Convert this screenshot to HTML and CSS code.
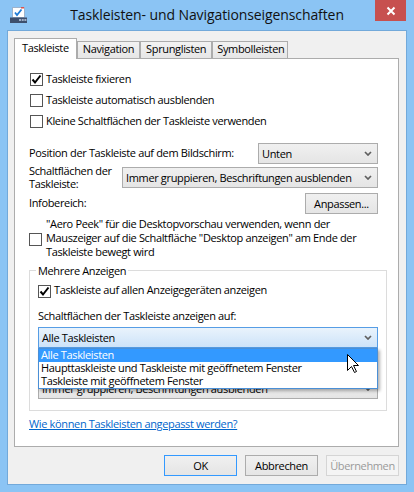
FILE: index.html
```html
<!DOCTYPE html>
<html lang="de">
  <head>
    <meta charset="UTF-8" />
    <meta name="viewport" content="width=device-width, initial-scale=1.0" />
    <title>Taskleisten- und Navigationseigenschaften</title>
    <link rel="stylesheet" href="styles.css">
  </head>
  <body>
    <div class="window">
      <header class="titlebar">
        <svg class="app-icon" width="17" height="16" viewBox="0 0 17 16">
          <rect x="2.5" y="0.5" width="12" height="10" fill="#fff" stroke="#9db3cc" />
          <rect x="11" y="0" width="3" height="1.5" fill="#d9534f" />
          <path d="M5 5.5 L7 8 L11.5 2.5" fill="none" stroke="#1f7bd6" stroke-width="1.8" />
          <rect x="0" y="10.5" width="17" height="5.5" fill="#3d4f6d" />
          <rect x="9" y="12" width="2" height="2" fill="#9fb0c8" />
          <rect x="11.7" y="12" width="2" height="2" fill="#9fb0c8" />
          <rect x="14.4" y="12" width="2" height="2" fill="#9fb0c8" />
        </svg>
        <div class="title">Taskleisten- und Navigationseigenschaften</div>
        <div class="close-btn">
          <svg width="10" height="10" viewBox="0 0 10 10">
            <path d="M1.5 1.5 L8.5 8.5 M8.5 1.5 L1.5 8.5" stroke="#fff" stroke-width="2" />
          </svg>
        </div>
      </header>

      <main class="client">
        <ul class="tabs">
          <li class="tab active">Taskleiste</li>
          <li class="tab">Navigation</li>
          <li class="tab">Sprunglisten</li>
          <li class="tab">Symbolleisten</li>
        </ul>

        <div class="panel">
          <div class="check">
            <span class="box"><svg width="11" height="11" viewBox="0 0 11 11"><path d="M1.5 5.5 L4 8.5 L9.5 1.5" fill="none" stroke="#000" stroke-width="2" /></svg></span>
            <span class="text">Taskleiste fixieren</span>
          </div>
          <div class="check">
            <span class="box"></span>
            <span class="text">Taskleiste automatisch ausblenden</span>
          </div>
          <div class="check">
            <span class="box"></span>
            <span class="text">Kleine Schaltflächen der Taskleiste verwenden</span>
          </div>

          <div class="field pos-row">
            <span class="text">Position der Taskleiste auf dem Bildschirm:</span>
            <div class="combo combo-small">
              <span>Unten</span>
              <svg class="chevron" width="8" height="5" viewBox="0 0 8 5"><path d="M1 1 L4 4 L7 1" fill="none" stroke="#5f5f5f" stroke-width="1.7" /></svg>
            </div>
          </div>

          <div class="field group-row">
            <span class="field-label">Schaltflächen der<br />Taskleiste:</span>
            <div class="combo grow">
              <span>Immer gruppieren, Beschriftungen ausblenden</span>
              <svg class="chevron" width="8" height="5" viewBox="0 0 8 5"><path d="M1 1 L4 4 L7 1" fill="none" stroke="#5f5f5f" stroke-width="1.7" /></svg>
            </div>
          </div>

          <div class="field info-row">
            <span class="text">Infobereich:</span>
            <button class="btn" type="button">Anpassen...</button>
          </div>

          <div class="check multi">
            <span class="box"></span>
            <span>"Aero Peek" für die Desktopvorschau verwenden, wenn der<br />Mauszeiger auf die Schaltfläche "Desktop anzeigen" am Ende der<br />Taskleiste bewegt wird</span>
          </div>

          <fieldset class="group">
            <legend>Mehrere Anzeigen</legend>
            <div class="check in-group">
              <span class="box"><svg width="11" height="11" viewBox="0 0 11 11"><path d="M1.5 5.5 L4 8.5 L9.5 1.5" fill="none" stroke="#000" stroke-width="2" /></svg></span>
              <span class="text">Taskleiste auf allen Anzeigegeräten anzeigen</span>
            </div>
            <div class="group-label">Schaltflächen der Taskleiste anzeigen auf:</div>
            <div class="combo-wrap">
              <div class="combo open">
                <span>Alle Taskleisten</span>
                <svg class="chevron" width="8" height="5" viewBox="0 0 8 5"><path d="M1 1 L4 4 L7 1" fill="none" stroke="#5f5f5f" stroke-width="1.7" /></svg>
              </div>
              <ul class="dropdown">
                <li class="selected">Alle Taskleisten</li>
                <li>Haupttaskleiste und Taskleiste mit geöffnetem Fenster</li>
                <li>Taskleiste mit geöffnetem Fenster</li>
                <svg class="cursor" width="13" height="20" viewBox="0 0 13 20">
                  <path d="M0.5 0.5 L0.5 16.5 L4.5 12.5 L7.5 18.5 L9.5 17.5 L6.5 11.5 L11.5 11.5 Z" fill="#fff" stroke="#000" stroke-width="1" />
                </svg>
              </ul>
            </div>
            <!-- label for the second combo is hidden under the open list -->
            <div class="combo combo-under">
              <span>Immer gruppieren, Beschriftungen ausblenden</span>
              <svg class="chevron" width="8" height="5" viewBox="0 0 8 5"><path d="M1 1 L4 4 L7 1" fill="none" stroke="#5f5f5f" stroke-width="1.7" /></svg>
            </div>
          </fieldset>

          <a href="#" class="help-link">Wie können Taskleisten angepasst werden?</a>
        </div>

        <div class="dialog-buttons">
          <button class="btn default" type="button">OK</button>
          <button class="btn" type="button">Abbrechen</button>
          <button class="btn disabled" type="button">Übernehmen</button>
        </div>
      </main>
    </div>
  </body>
</html>
```

FILE: styles.css
```css
/* Windows 8 dialog: Taskleisten- und Navigationseigenschaften */

body {
  margin: 0;
  font-family: "Open Sans", "Segoe UI", sans-serif;
  font-size: 11px;
  letter-spacing: -0.35px;
  color: #000;
}

.window {
  width: 414px;
  height: 492px;
  box-sizing: border-box;
  background-color: #8bc4f4;
  padding: 0 7px 7px;
  display: flex;
  flex-direction: column;
}

.titlebar {
  height: 30px;
  padding: 0 1px;
  display: grid;
  grid-template-columns: 1fr auto 1fr;
  align-items: start;
}

.app-icon {
  margin: 7px 0 0 2px;
}

.title {
  font-size: 14px;
  letter-spacing: -0.1px;
  line-height: 29px;
  color: #111;
}

.close-btn {
  justify-self: end;
  width: 31px;
  height: 21px;
  background-color: #c7504f;
  display: flex;
  align-items: center;
  justify-content: center;
}

.client {
  flex: 1;
  background-color: #f0f0f0;
  border: 1px solid #72a9da;
  padding: 7px 7px 0 6px;
  display: flex;
  flex-direction: column;
}

/* tabs */

.tabs {
  list-style: none;
  margin: 0;
  padding: 0;
  height: 20px;
  display: flex;
  align-items: flex-end;
  position: relative;
  z-index: 1;
}

.tab {
  box-sizing: border-box;
  height: 17px;
  line-height: 14px;
  padding: 0 5px;
  border: 1px solid #acacac;
  border-bottom: none;
  background: linear-gradient(#f2f2f2, #e6e6e6);
}

.tab:last-child {
  padding: 0 3px 0 4px;
}

.tab.active {
  height: 21px;
  line-height: 17px;
  padding: 0 7px;
  margin-bottom: -1px;
  background: #fff;
}

.panel {
  height: 389px;
  box-sizing: border-box;
  background-color: #fff;
  border: 1px solid #acacac;
  padding-top: 10px;
  display: flex;
  flex-direction: column;
}

/* checkboxes */

.check {
  display: flex;
  align-items: center;
  height: 21px;
  margin-left: 15px;
}

.check .text,
.field .text {
  margin-bottom: 3px;
}

.box {
  width: 13px;
  height: 13px;
  box-sizing: border-box;
  border: 1px solid #555;
  background-color: #fff;
  margin-right: 3px;
  flex-shrink: 0;
  display: flex;
}

.check.multi {
  height: auto;
  line-height: 14px;
  margin-top: 3px;
  margin-left: 14px;
}

.check.multi .box {
  margin-top: 3px;
  margin-right: 4px;
}

/* label + control rows */

.field {
  display: flex;
  align-items: center;
  justify-content: space-between;
  margin: 0 20px 0 14px;
}

.pos-row {
  height: 21px;
  margin-top: 11px;
}

.group-row {
  height: 27px;
  line-height: 13.5px;
}

.field-label {
  width: 93px;
  flex-shrink: 0;
  margin-bottom: 1px;
}

.info-row {
  height: 21px;
  margin-top: 2px;
}

.combo {
  box-sizing: border-box;
  height: 21px;
  border: 1px solid #acacac;
  background: linear-gradient(#f0f0f0, #e5e5e5);
  padding: 0 5px 0 3px;
  display: flex;
  align-items: center;
  justify-content: space-between;
}

.combo-small {
  width: 120px;
}

.combo.grow {
  flex: 1;
}

.combo.open {
  border-color: #569de5;
  background: linear-gradient(#e9f3fc, #cde3f9);
}

.chevron {
  flex-shrink: 0;
}

/* group box */

.group {
  margin: 4px 11px 0 14px;
  padding: 0 8px 11px;
  border: 1px solid #dcdcdc;
  min-width: 0;
}

.group legend {
  line-height: 15px;
  padding: 0 2px;
  margin-left: -2px;
}

.check.in-group {
  height: 20px;
  margin: 3px 0 0 0;
}

.group-label {
  line-height: 14px;
  margin-top: 8px;
}

.combo-wrap {
  position: relative;
  margin-top: 4px;
}

.combo-under {
  margin-top: 30px;
}

.dropdown {
  list-style: none;
  margin: 0;
  padding: 0;
  position: absolute;
  top: 100%;
  left: 0;
  right: 0;
  z-index: 2;
  background-color: #fff;
  border: 1px solid #4a8fd6;
  box-shadow: 2px 2px 3px rgba(0, 0, 0, 0.3);
}

.dropdown li {
  height: 13px;
  line-height: 12px;
  padding-left: 2px;
  white-space: nowrap;
}

.dropdown li.selected {
  background-color: #3399ff;
  color: #fff;
}

.cursor {
  position: absolute;
  left: 308px;
  top: 5px;
}

.help-link {
  align-self: flex-start;
  margin: 6px 0 0 14px;
  line-height: 14px;
  color: #0066cc;
  text-decoration: underline;
}

/* buttons */

.btn {
  width: 73px;
  height: 21px;
  box-sizing: border-box;
  border: 1px solid #acacac;
  background: linear-gradient(#f0f0f0, #e5e5e5);
  font: inherit;
  letter-spacing: inherit;
  color: #000;
  padding: 0;
}

.btn.default {
  border-color: #3399ff;
}

.btn.disabled {
  border-color: #d5d5d5;
  background: #f4f4f4;
  color: #9a9a9a;
}

.dialog-buttons {
  display: flex;
  justify-content: flex-end;
  gap: 8px;
  margin-top: 8px;
}
```
